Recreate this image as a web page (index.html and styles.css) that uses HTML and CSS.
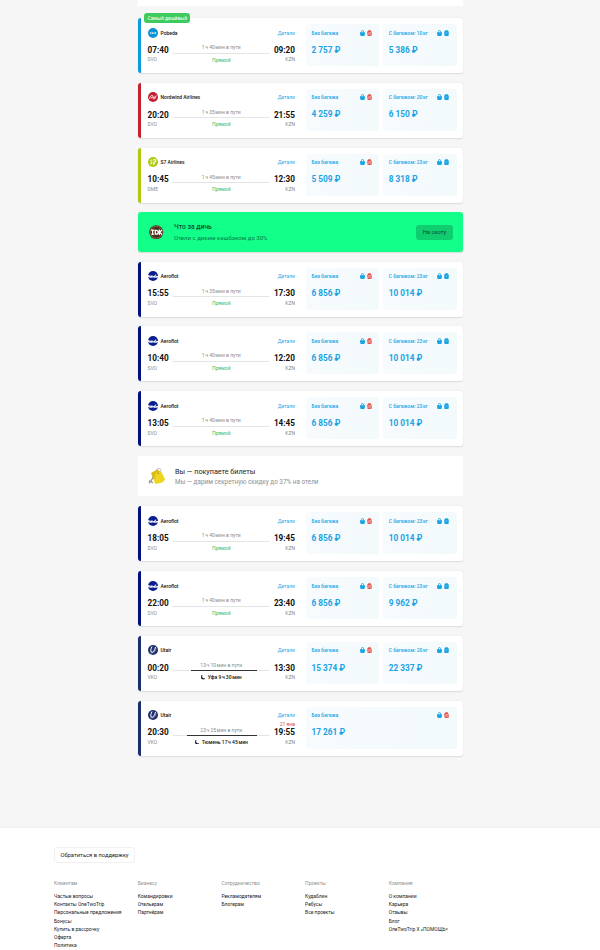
FILE: index.html
```html
<!DOCTYPE html>
<html lang="ru">
<head>
    <meta charset="UTF-8">
    <meta name="viewport" content="width=device-width, initial-scale=1.0">
    <title>Авиабилеты Москва — Казань</title>
    <link rel="stylesheet" href="styles.css">
</head>
<body>
    <svg class="sprite">
        <symbol id="pobeda" viewBox="0 0 20 20"><circle cx="10" cy="10" r="10" fill="#0a93d6"/><circle cx="5.400" cy="10" r="1.700" fill="#fff"/><circle cx="9.600" cy="10" r="1.700" fill="#fff"/><path d="M12.500 10h4M14.500 8v4" stroke="#fff" stroke-width="1.400"/></symbol>
        <symbol id="nordwind" viewBox="0 0 20 20"><circle cx="10" cy="10" r="10" fill="#c4202f"/><path d="M3 13C4 8 7 6 9 7s1 5 2.500 5S14 8 17 7M6 13c1-3 2-4 3-3s1 4 3 4 3-3 4-5" fill="none" stroke="#fff" stroke-width="1.700"/></symbol>
        <symbol id="s7" viewBox="0 0 20 20"><circle cx="10" cy="10" r="10" fill="#b0c80f"/><path d="M9 6.500c-3-1.200-5 .8-3 2.500s3 3 0 4.500H4M10.500 5.500H16c-1 4-3 7-5 10 0-4 1-6 2.500-8" fill="none" stroke="#fff" stroke-width="2"/></symbol>
        <symbol id="aeroflot" viewBox="0 0 20 20"><circle cx="10" cy="10" r="10" fill="#0a1f8f"/><path d="M0 8c3 1 5 2 7 1s3 2 5 1 1-4 5-3c-3 1-2 3 1 3h2v2c-3 3-6 1-9 1s-7 1-11-1z" fill="#fff"/><path d="M3 11h2M9 11.500h2M14 11.500h3" stroke="#0a1f8f" stroke-width="1"/></symbol>
        <symbol id="utair" viewBox="0 0 20 20"><circle cx="10" cy="10" r="10" fill="#21306f"/><path d="M8 3c-2 5-4 9-1 11s6-3 8-10" fill="none" stroke="#fff" stroke-width="2"/><path d="M5 15c5 2 9-2 11-8" fill="none" stroke="#fff" stroke-width="1"/></symbol>
        <symbol id="bag" viewBox="0 0 10 12"><path d="M3 5V3a2 2 0 0 1 4 0v2" fill="none" stroke="#1ba3e4" stroke-width="1.800"/><path d="M0 4.500h10v2.500L8.800 12H1.200L0 7z" fill="#1ba3e4"/></symbol>
        <symbol id="case" viewBox="0 0 10 12"><path d="M3 3V1h4v2" fill="none" stroke="#1ba3e4" stroke-width="1.600"/><rect x=".5" y="2" width="9" height="10" rx="1.800" fill="#1ba3e4"/><path d="M3 6h4" stroke="#a8dbf4" stroke-width="1"/></symbol>
        <symbol id="nocase" viewBox="0 0 10 12"><path d="M3 3V1h4v2" fill="none" stroke="#e2554e" stroke-width="1.600"/><rect x=".5" y="2" width="9" height="10" rx="1.800" fill="#e2554e"/><path d="M0 10.500L10 3M3 5.500h2.500M5.500 9.500H8" stroke="#fff" stroke-width="1.100"/></symbol>
        <symbol id="moon" viewBox="0 0 10 10"><path d="M3 0A5.200 5.200 0 1 0 10 7 5 5 0 0 1 3 0z" fill="#111" stroke="#111"/></symbol>
    </svg>

    <main class="results">
        <div class="card-stub"></div>
        <div class="list" id="list"></div>
    </main>

    <template id="huntBanner">
        <div class="banner banner-green">
            <svg class="banner-icon" viewBox="0 0 30 30">
                <circle cx="15" cy="15" r="14.500" fill="#49301f"/>
                <circle cx="15" cy="15" r="12.500" fill="none" stroke="#8b6545" stroke-width="2"/>
                <path d="M4 10.500h7M7.500 10v9M5 19.500h5M13 11v8h2q4 0 4-4t-4-4zM21.500 9.500v11M27 10l-5 5 5 5" fill="none" stroke="#fff" stroke-width="2.600"/>
            </svg>
            <div class="banner-text">
                <h3>Что за дичь</h3>
                <p>Отели с диким кэшбэком до 30%</p>
            </div>
            <button class="banner-btn">На охоту</button>
        </div>
    </template>
    <template id="hotelBanner">
        <div class="banner banner-white">
            <svg class="banner-icon" viewBox="0 0 32 32">
                <circle cx="20" cy="5" r="4.500" fill="none" stroke="#b9b9b2" stroke-width="1.500"/>
                <path d="M14 12L2 29M5 25l4 3M2 24l3 2" stroke="#98958c" stroke-width="2.500"/>
                <path d="M6 9l12-6 5 4-3 13-9 2-3-5z" fill="#d8bb18"/>
                <path d="M15 8l10-1 7 14-4 6-13 3-4-5z" fill="#f0d51f"/>
                <circle cx="19" cy="10" r="1.400" fill="#8f7b16"/>
            </svg>
            <div class="banner-text">
                <h3>Вы — покупаете билеты</h3>
                <p>Мы — дарим секретную скидку до 37% на отели</p>
            </div>
        </div>
    </template>

    <footer class="footer">
        <button class="support-btn">Обратиться в поддержку</button>
        <div class="footer-cols">
            <div class="footer-col">
                <h4>Клиентам</h4>
                <a>Частые вопросы</a>
                <a>Контакты OneTwoTrip</a>
                <a>Персональные предложения</a>
                <a>Бонусы</a>
                <a>Купить в рассрочку</a>
                <a>Оферта</a>
                <a>Политика</a>
            </div>
            <div class="footer-col">
                <h4>Бизнесу</h4>
                <a>Командировки</a>
                <a>Отельерам</a>
                <a>Партнёрам</a>
            </div>
            <div class="footer-col">
                <h4>Сотрудничество</h4>
                <a>Рекламодателям</a>
                <a>Блогерам</a>
            </div>
            <div class="footer-col">
                <h4>Проекты</h4>
                <a>Кудаблин</a>
                <a>Ребусы</a>
                <a>Все проекты</a>
            </div>
            <div class="footer-col">
                <h4>Компания</h4>
                <a>О компании</a>
                <a>Карьера</a>
                <a>Отзывы</a>
                <a>Блог</a>
                <a>OneTwoTrip Х «ПОМОЩЬ»</a>
            </div>
        </div>
    </footer>

    <script>
        const airlines = { pobeda: 'Pobeda', nordwind: 'Nordwind Airlines', s7: 'S7 Airlines', aeroflot: 'Aeroflot', utair: 'Utair' };
        const items = [
            { air: 'pobeda', dep: '07:40', arr: '09:20', from: 'SVO', time: '1 ч 40 мин в пути', price: '2 757', kg: 10, bagPrice: '5 386', badge: 'Самый дешёвый' },
            { air: 'nordwind', dep: '20:20', arr: '21:55', from: 'SVO', time: '1 ч 35 мин в пути', price: '4 259', kg: 20, bagPrice: '6 150' },
            { air: 's7', dep: '10:45', arr: '12:30', from: 'DME', time: '1 ч 45 мин в пути', price: '5 509', kg: 23, bagPrice: '8 318' },
            { banner: 'huntBanner' },
            { air: 'aeroflot', dep: '15:55', arr: '17:30', from: 'SVO', time: '1 ч 35 мин в пути', price: '6 856', kg: 23, bagPrice: '10 014' },
            { air: 'aeroflot', dep: '10:40', arr: '12:20', from: 'SVO', time: '1 ч 40 мин в пути', price: '6 856', kg: 23, bagPrice: '10 014' },
            { air: 'aeroflot', dep: '13:05', arr: '14:45', from: 'SVO', time: '1 ч 40 мин в пути', price: '6 856', kg: 23, bagPrice: '10 014' },
            { banner: 'hotelBanner' },
            { air: 'aeroflot', dep: '18:05', arr: '19:45', from: 'SVO', time: '1 ч 40 мин в пути', price: '6 856', kg: 23, bagPrice: '10 014' },
            { air: 'aeroflot', dep: '22:00', arr: '23:40', from: 'SVO', time: '1 ч 40 мин в пути', price: '6 856', kg: 23, bagPrice: '9 962' },
            { air: 'utair', dep: '00:20', arr: '13:30', from: 'VKO', time: '13 ч 10 мин в пути', price: '15 374', kg: 20, bagPrice: '22 337', stop: 'Уфа 9 ч 30 мин', start: 19, wait: 67 },
            { air: 'utair', dep: '20:30', arr: '19:55', from: 'VKO', time: '23 ч 25 мин в пути', price: '17 261', stop: 'Тюмень 17 ч 45 мин', start: 15, wait: 71, date: '21 янв' }
        ];
        const icon = (id, cls) => `<svg class="${cls}"><use href="#${id}"/></svg>`;
        // narrow gaps between numbers and units
        const thin = s => s.replace(/(\d) (ч|мин)/g, '$1<i class="thin"></i>$2');
        const fare = (label, price, bag) => `
            <div class="fare">
                <div class="fare-top"><span>${label}</span><span class="fare-icons">${icon('bag', 'fare-icon')}${icon(bag, 'fare-icon')}</span></div>
                <div class="fare-price">${price} ₽</div>
            </div>`;
        const card = f => `
            <div class="card card-${f.air}">
                ${f.badge ? `<span class="badge">${f.badge}</span>` : ''}
                <div class="flight">
                    <div class="flight-top">
                        ${icon(f.air, 'logo')}
                        <span class="airline">${airlines[f.air]}</span>
                        <a class="details">Детали</a>
                    </div>
                    <div class="route">
                        <div class="point"><b>${f.dep}</b><span>${f.from}</span></div>
                        <div class="path">
                            <span class="duration">${thin(f.time)}</span>
                            <div class="line">${f.wait ? `<div class="wait" style="width: ${f.wait}%; margin-left: ${f.start}%"></div>` : ''}</div>
                            ${f.stop ? `<span class="stop">${icon('moon', 'moon')}${thin(f.stop)}</span>` : '<span class="direct">Прямой</span>'}
                        </div>
                        <div class="point point-end">${f.date ? `<em class="date">${f.date}</em>` : ''}<b>${f.arr}</b><span>KZN</span></div>
                    </div>
                </div>
                <div class="fares">
                    ${fare('Без багажа', f.price, 'nocase')}
                    ${f.bagPrice ? fare('С багажом: ' + f.kg + '<i class="thin"></i>кг', f.bagPrice, 'case') : ''}
                </div>
            </div>`;
        document.getElementById('list').innerHTML = items.map(i => i.banner ? document.getElementById(i.banner).innerHTML : card(i)).join('');
    </script>
</body>
</html>
```
FILE: styles.css
```css
* { margin: 0; padding: 0; box-sizing: border-box; }
body { width: 600px; height: 950px; overflow: hidden; background: #f6f6f6; font-family: Roboto, "Liberation Sans", sans-serif; font-size: 5px; color: #111; display: flex; flex-direction: column; }
.sprite { display: none; }
button { font-family: inherit; border: none; }
.results { width: 324.5px; margin-left: 138px; height: 828px; flex: none; }
.card-stub { height: 6px; margin-bottom: 12px; background: #fff; }
.list { display: flex; flex-direction: column; gap: 9.8px; }
.card { position: relative; display: flex; height: 55px; background: #fff; border-radius: 3px; border-left: 3px solid #000; box-shadow: 0 0.5px 1.5px rgba(0,0,0,0.11); padding: 6px 6px 7px 6.5px; }
.card-pobeda { border-left-color: #0a9bd8; }
.card-nordwind { border-left-color: #c4202f; }
.card-s7 { border-left-color: #b0c80f; }
.card-aeroflot { border-left-color: #02127d; }
.card-utair { border-left-color: #1d2e6c; }
.badge { position: absolute; left: 3.2px; top: -5px; height: 10px; line-height: 10px; padding: 0 3.2px; border-radius: 3px; background: #3ccb5c; color: #fff; font-size: 5px; white-space: nowrap; }
.flight { width: 147.5px; flex: none; padding-top: 3.5px; }
.flight-top { display: flex; align-items: center; height: 10px; }
.logo { width: 10px; height: 10px; margin-right: 3px; }
.airline { font-size: 5px; font-weight: 500; }
.details { margin-left: auto; color: #2aa8e4; font-size: 5px; }
.route { display: flex; justify-content: space-between; margin-top: 6.5px; }
.point { position: relative; display: flex; flex-direction: column; width: 22px; }
.point b { font-size: 8.2px; line-height: 11px; margin-top: 0.8px; font-weight: 700; }
.point span { font-size: 5px; line-height: 6px; margin-top: 0.7px; color: #8a8a8a; }
.point-end { align-items: flex-end; text-align: right; }
.date { position: absolute; right: 0; top: -6px; font-style: normal; font-size: 5px; line-height: 6px; white-space: nowrap; color: #e84646; }
.path { width: 98px; display: flex; flex-direction: column; align-items: center; font-size: 5px; line-height: 6px; white-space: nowrap; }
.duration { color: #8a8a8a; }
.line { width: 100%; height: 3px; border-bottom: 1px solid #e4e4e4; border-radius: 0 0 2px 2px; margin: 0.5px 0 3px; }
.wait { height: 1px; margin-top: 2px; background: #333; }
.direct { color: #3dbb5d; }
.stop { display: flex; align-items: center; font-weight: 500; }
.moon { width: 4.5px; height: 4.5px; margin-right: 2.5px; }
.thin { display: inline-block; width: 0.6px; }
.fares { flex: 1; display: flex; gap: 4px; margin-left: 11px; }
.fare { flex: 1; background: linear-gradient(100deg, #f7fbfd, #f3fafc); border-radius: 3px; padding: 5.5px 7.5px 0 5.5px; color: #1ba3e4; }
.fare-top { display: flex; justify-content: space-between; align-items: center; height: 6px; font-size: 5px; font-weight: 500; white-space: nowrap; }
.fare-icons { display: flex; gap: 1.8px; }
.fare-icon { width: 5px; height: 6px; }
.fare-price { margin-top: 9.2px; font-size: 8.25px; line-height: 11px; font-weight: 700; }
.banner { display: flex; align-items: center; border-radius: 3px; }
.banner h3 { font-size: 7.2px; line-height: 9px; font-weight: 400; color: #222; }
.banner p { font-size: 6.05px; line-height: 8px; margin-top: 2px; }
.banner-green { height: 39.4px; background: #12ff8a; padding: 0 9.5px 0 11px; box-shadow: 0 0.5px 1px rgba(0,0,0,0.12); }
.banner-green .banner-icon { width: 14.5px; height: 14.5px; margin-right: 10.5px; }
.banner-green h3 { font-weight: 500; font-size: 6.8px; color: #06522f; }
.banner-green p { color: #087a45; }
.banner-btn { margin-left: auto; width: 37px; height: 15px; border-radius: 3px; background: #10cd70; color: #064f2c; font-size: 5.8px; }
.banner-white { height: 40.5px; background: #fff; padding-left: 10px; }
.banner-white .banner-icon { width: 17px; height: 17px; margin-right: 10px; }
.banner-white p { color: #8f8f8f; font-size: 6.37px; }
.footer { flex: none; height: 140px; background: #fff; padding: 19px 0 0 54px; box-shadow: 0 -1px 1.5px rgba(0,0,0,0.04); }
.support-btn { display: block; width: 81px; height: 15.5px; border: 1px solid #f0f0f0; border-radius: 3px; background: #fff; color: #222; font-size: 5.8px; white-space: nowrap; }
.footer-cols { display: grid; grid-template-columns: repeat(5, 83.7px); margin-top: 16.5px; }
.footer-col { display: flex; flex-direction: column; }
.footer-col h4 { font-size: 5px; line-height: 8px; font-weight: 400; color: #8f8f8f; margin-bottom: 5px; }
.footer-col a { font-size: 4.95px; line-height: 8.18px; color: #222; white-space: nowrap; }
```
